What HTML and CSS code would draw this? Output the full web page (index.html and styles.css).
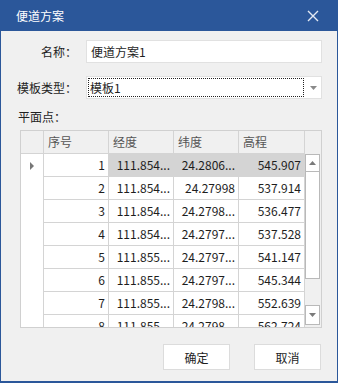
FILE: index.html
```html
<!DOCTYPE html>
<html lang="zh-CN">
<head>
    <meta charset="UTF-8">
    <title>便道方案</title>
    <link rel="stylesheet" href="styles.css">
</head>
<body>
    <div class="window">
        <div class="titlebar">
            <span class="title">便道方案</span>
            <svg class="close" width="12" height="12" viewBox="0 0 12 12">
                <path d="M1 1 L11 11 M11 1 L1 11" stroke="#e4eaf3" stroke-width="1.4" fill="none"/>
            </svg>
        </div>

        <div class="content">
            <div class="field-row">
                <label class="field-label">名称：</label>
                <div class="textbox">便道方案1</div>
            </div>

            <div class="field-row second">
                <label class="field-label">模板类型：</label>
                <div class="combo">
                    <div class="combo-text"><span class="focus-rect">模板1</span></div>
                    <div class="combo-drop">
                        <svg width="7" height="4" viewBox="0 0 7 4"><path d="M0 0 L7 0 L3.5 4 Z" fill="#8a8a8a"/></svg>
                    </div>
                </div>
            </div>

            <div class="section-label">平面点：</div>

            <div class="grid">
                <div class="grid-head">
                    <div class="hcell c-rh"></div>
                    <div class="hcell c-no">序号</div>
                    <div class="hcell c-lng">经度</div>
                    <div class="hcell c-lat">纬度</div>
                    <div class="hcell c-elev">高程</div>
                    <div class="hcell c-fill"></div>
                </div>
                <div class="grid-body">
                    <div class="rows">
                        <div class="row selected">
                            <div class="cell c-rh"><span class="row-arrow"></span></div>
                            <div class="cell c-no">1</div>
                            <div class="cell c-lng">111.854...</div>
                            <div class="cell c-lat">24.2806...</div>
                            <div class="cell c-elev">545.907</div>
                        </div>
                        <div class="row">
                            <div class="cell c-rh"></div>
                            <div class="cell c-no">2</div>
                            <div class="cell c-lng">111.854...</div>
                            <div class="cell c-lat">24.27998</div>
                            <div class="cell c-elev">537.914</div>
                        </div>
                        <div class="row">
                            <div class="cell c-rh"></div>
                            <div class="cell c-no">3</div>
                            <div class="cell c-lng">111.854...</div>
                            <div class="cell c-lat">24.2798...</div>
                            <div class="cell c-elev">536.477</div>
                        </div>
                        <div class="row">
                            <div class="cell c-rh"></div>
                            <div class="cell c-no">4</div>
                            <div class="cell c-lng">111.854...</div>
                            <div class="cell c-lat">24.2797...</div>
                            <div class="cell c-elev">537.528</div>
                        </div>
                        <div class="row">
                            <div class="cell c-rh"></div>
                            <div class="cell c-no">5</div>
                            <div class="cell c-lng">111.855...</div>
                            <div class="cell c-lat">24.2797...</div>
                            <div class="cell c-elev">541.147</div>
                        </div>
                        <div class="row">
                            <div class="cell c-rh"></div>
                            <div class="cell c-no">6</div>
                            <div class="cell c-lng">111.855...</div>
                            <div class="cell c-lat">24.2797...</div>
                            <div class="cell c-elev">545.344</div>
                        </div>
                        <div class="row">
                            <div class="cell c-rh"></div>
                            <div class="cell c-no">7</div>
                            <div class="cell c-lng">111.855...</div>
                            <div class="cell c-lat">24.2798...</div>
                            <div class="cell c-elev">552.639</div>
                        </div>
                        <div class="row">
                            <div class="cell c-rh"></div>
                            <div class="cell c-no">8</div>
                            <div class="cell c-lng">111.855...</div>
                            <div class="cell c-lat">24.2798...</div>
                            <div class="cell c-elev">562.724</div>
                        </div>
                    </div>
                    <div class="vscroll">
                        <div class="sb-btn sb-up">
                            <svg width="7" height="4" viewBox="0 0 7 4"><path d="M0 4 L7 4 L3.5 0 Z" fill="#7a7a7a"/></svg>
                        </div>
                        <div class="sb-thumb"></div>
                        <div class="sb-track"></div>
                        <div class="sb-btn sb-down">
                            <svg width="7" height="4" viewBox="0 0 7 4"><path d="M0 0 L7 0 L3.5 4 Z" fill="#7a7a7a"/></svg>
                        </div>
                    </div>
                </div>
            </div>

            <div class="buttons">
                <button class="button">确定</button>
                <button class="button">取消</button>
            </div>
        </div>
    </div>
</body>
</html>
```

FILE: styles.css
```css
body {
    margin: 0;
    font-family: "Noto Sans CJK SC", "Noto Sans", sans-serif;
    font-size: 12px;
    color: #1e1e1e;
}
.window {
    width: 338px;
    height: 383px;
    box-sizing: border-box;
    border: 1px solid #2b579a;
    border-top: none;
    border-bottom-width: 2px;
    background: #f0f0f0;
    display: flex;
    flex-direction: column;
}
.titlebar {
    height: 31px;
    flex: none;
    background: #2b579a;
    display: flex;
    align-items: center;
    justify-content: space-between;
    padding: 0 18px 0 15px;
}
.title {
    color: #fff;
    font-size: 12px;
}
.content {
    padding: 9px 15px 0 16px;
}
.field-row {
    display: flex;
    align-items: center;
    height: 23px;
    gap: 9px;
}
.field-row.second { margin-top: 13px; }
.field-label {
    width: 60px;
    text-align: right;
    color: #1e1e1e;
}
.textbox {
    flex: 1;
    height: 23px;
    box-sizing: border-box;
    background: #fff;
    border: 1px solid #e1e1e1;
    padding: 0 4px;
    line-height: 21px;
}
.combo {
    flex: 1;
    height: 23px;
    box-sizing: border-box;
    background: #fff;
    border: 1px solid #e1e1e1;
    display: flex;
}
.combo-text {
    flex: 1;
    padding: 1px;
    display: flex;
}
.focus-rect {
    flex: 1;
    border: 1px dotted #222;
    line-height: 17px;
    padding-left: 1px;
}
.combo-drop {
    width: 16px;
    display: flex;
    align-items: center;
    justify-content: center;
}
.section-label {
    margin-top: 9px;
    line-height: 18px;
    padding-left: 1px;
}
.grid {
    margin: 4px 0 0 3px;
    width: 302px;
    height: 198px;
    box-sizing: border-box;
    border: 1px solid #d0d0d0;
    background: #f0f0f0;
    display: flex;
    flex-direction: column;
}
.grid-head {
    display: flex;
    height: 23px;
    flex: none;
}
.hcell {
    box-sizing: border-box;
    height: 23px;
    border-right: 1px solid #d4d4d4;
    border-bottom: 1px solid #d4d4d4;
    line-height: 22px;
    padding-left: 4px;
    color: #555;
    background: #f0f0f0;
}
.c-rh { width: 23px; }
.c-no { width: 65px; }
.c-lng { width: 65px; }
.c-lat { width: 65px; }
.c-elev { width: 66px; }
.hcell.c-fill {
    flex: 1;
    border-right: none;
    border-bottom: none;
}
.grid-body {
    flex: 1;
    display: flex;
    overflow: hidden;
}
.rows {
    width: 284px;
    overflow: hidden;
}
.row {
    display: flex;
    height: 23px;
}
.cell {
    box-sizing: border-box;
    height: 23px;
    background: #fff;
    border-right: 1px solid #d4d4d4;
    border-bottom: 1px solid #d4d4d4;
    line-height: 22px;
    text-align: right;
    padding-right: 3px;
    white-space: nowrap;
    overflow: hidden;
}
.cell.c-rh {
    border-bottom: none;
    display: flex;
    align-items: center;
    padding-left: 9px;
}
.row.selected .c-lng,
.row.selected .c-lat,
.row.selected .c-elev {
    background: #d4d4d4;
}
.row-arrow {
    width: 0;
    height: 0;
    border-top: 4px solid transparent;
    border-bottom: 4px solid transparent;
    border-left: 4px solid #777;
}
.vscroll {
    width: 15px;
    margin-right: 1px;
    display: flex;
    flex-direction: column;
    padding-bottom: 2px;
}
.sb-btn {
    box-sizing: border-box;
    border: 1px solid #b9b9b9;
    background: #fff;
    display: flex;
    align-items: center;
    justify-content: center;
}
.sb-up {
    height: 18px;
}
.sb-thumb {
    height: 107px;
    box-sizing: border-box;
    border: 1px solid #b9b9b9;
    border-top: none;
    background: #fff;
}
.sb-track { flex: 1; }
.sb-down { height: 20px; }
.buttons {
    display: flex;
    justify-content: flex-end;
    gap: 24px;
    margin-top: 16px;
    padding-right: 1px;
}
.button {
    width: 67px;
    height: 26px;
    background: #fff;
    border: 1px solid #dcdcdc;
    font-family: inherit;
    font-size: 12px;
    color: #1e1e1e;
    padding: 0;
}
```
